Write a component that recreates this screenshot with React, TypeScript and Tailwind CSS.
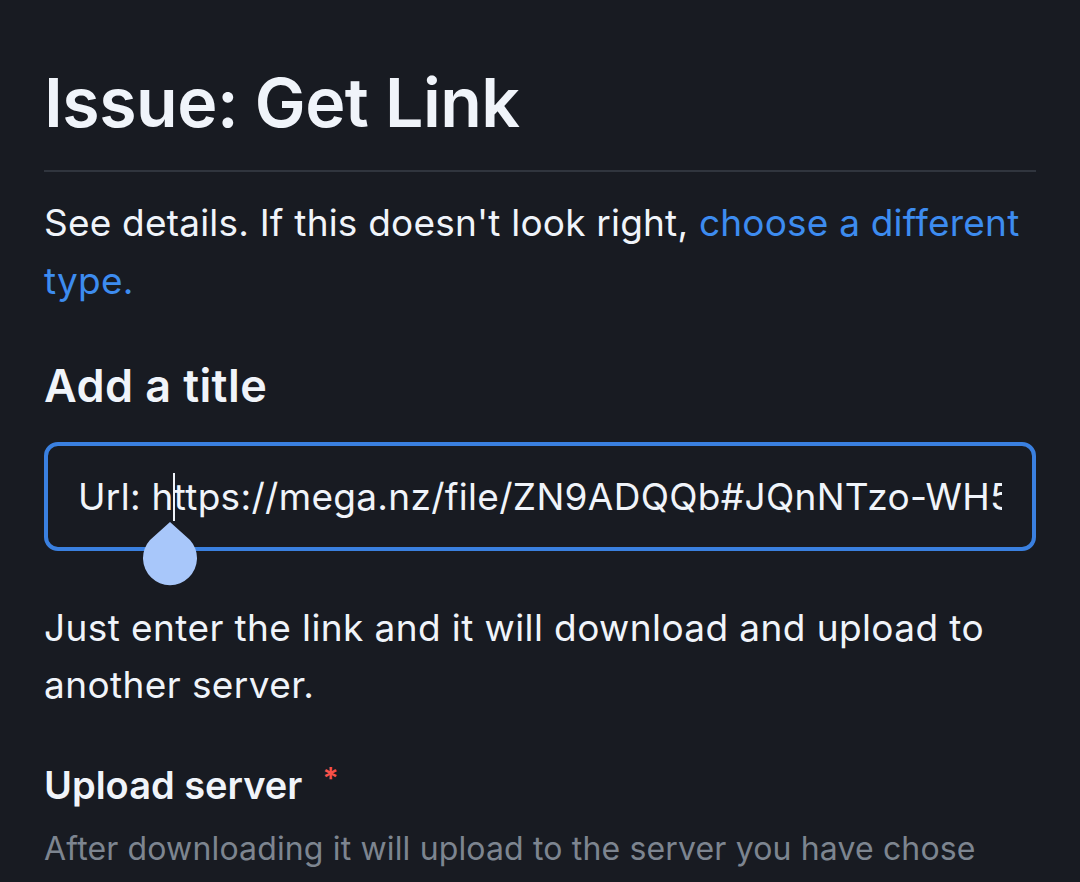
export default function App() {
  return (
    <div className="min-h-[882px] h-[882px] overflow-hidden bg-[#181b22] px-[44px] pt-[62px] text-[#f0f4fa] font-['Inter','Noto_Sans',sans-serif]">
      <h1 className="text-[68px] font-semibold leading-[80px] tracking-[-0.5px]">Issue: Get Link</h1>
      <div className="mt-[28px] h-[2px] bg-[#30353e]" />

      <p className="mt-[22px] text-[37px] leading-[58px] tracking-[0.2px]">
        See details. If this doesn't look right,{" "}
        <span className="text-[#3d8cf0]">choose a different type.</span>
      </p>

      <h2 className="mt-[50px] text-[45px] font-semibold leading-[52px] tracking-[0.4px]">Add a title</h2>

      {/* title input, focused */}
      <div className="relative mt-[30px] flex h-[109px] items-center rounded-[14px] border-[4px] border-[#3a80e0] pl-[30px] pr-[30px]">
        <div className="overflow-hidden whitespace-nowrap text-[37px] leading-[48px] tracking-[0.3px]">
          Url: h
          <span className="relative">
            <span className="absolute left-[-1px] top-[-2px] h-[52px] w-[2px] bg-[#f0f4fa]" />
          </span>
          ttps://mega.nz/file/ZN9ADQQb#JQnNTzo-WH5
        </div>
        {/* selection handle */}
        <svg className="absolute left-[94px] top-[76px]" width="56" height="64" viewBox="0 0 56 64">
          <path d="M28 0 L48 18 A27 27 0 1 1 8 18 Z" fill="#a8c7fa" />
        </svg>
      </div>

      <p className="mt-[48px] text-[37px] leading-[57px] tracking-[0.4px]">
        Just enter the link and it will download and upload to another server.
      </p>

      <h2 className="mt-[47px] flex items-start text-[38px] font-semibold leading-[50px]">
        Upload server <span className="ml-[20px] text-[30px] leading-[36px] text-[#f85149]">*</span>
      </h2>

      <p className="mt-[14px] whitespace-nowrap text-[32px] leading-[50px] tracking-[0.15px] text-[#7d8590]">
        After downloading it will upload to the server you have chose
      </p>
    </div>
  );
}
